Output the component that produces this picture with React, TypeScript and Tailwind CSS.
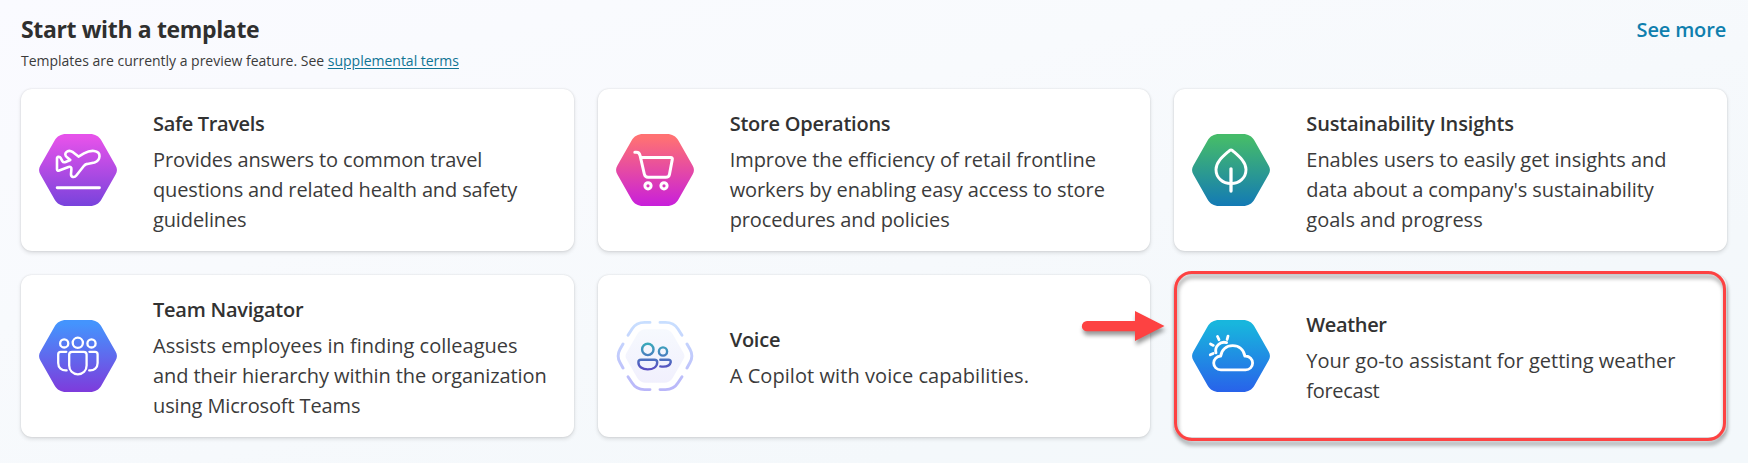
import React from "react";

type Line = { text: string; tracking: string };
type Template = {
  title: string;
  titleTracking: string;
  lines: Line[];
  icon: React.ReactNode;
  highlighted?: boolean;
};

const HEX =
  "M27 0H51C56 0 60 2.2 62.4 6.5L76.6 31.5C78.4 34.5 78.4 37.5 76.6 40.5L62.4 65.5C60 69.8 56 72 51 72H27C22 72 18 69.8 15.6 65.5L1.4 40.5C-.4 37.5-.4 34.5 1.4 31.5L15.6 6.5C18 2.2 22 0 27 0Z";

function HexIcon({ id, from, to, width, children }: { id: string; from: string; to: string; width: number; children: React.ReactNode }) {
  return (
    <svg width="78" height="72" viewBox="0 0 78 72" fill="none" className="shrink-0" aria-hidden="true">
      <defs>
        <linearGradient id={id} x1="0" y1="0" x2="0" y2="1">
          <stop offset="0.05" stopColor={from} />
          <stop offset="1" stopColor={to} />
        </linearGradient>
      </defs>
      <path d={HEX} fill={`url(#${id})`} />
      <g stroke="#fff" strokeWidth={width} strokeLinecap="round" strokeLinejoin="round">
        {children}
      </g>
    </svg>
  );
}

function PlaneIcon() {
  return (
    <HexIcon id="plane" from="#e552ea" to="#7843dc" width={2.6}>
      <path d="M18 24.5V35.2C18 36.6 19 37 20.2 36.5L29.5 33C31.6 32.4 32.6 33.4 32.4 35.2L32 40C31.8 43.4 35.4 44 37.3 41.5L45 31.8C46 30.6 46.8 30.2 48.4 29.9L55.5 28.4C61.5 26.5 63 17.8 55 17C51.5 16.6 48 17.8 45 19.4L39.5 22.6L34 18.2C28.6 14.6 23.6 19.8 28 23.3L31.3 26L26.6 28C25 28.6 24 28.2 23.3 27L21.6 23.9C20.7 22.3 18 22.5 18 24.5Z" />
      <path d="M18.2 53.7H60.4" strokeWidth="2.9" />
    </HexIcon>
  );
}

function CartIcon() {
  return (
    <HexIcon id="cart" from="#ff7173" to="#c81fdb" width={3}>
      <path d="M18.8 18.3H20.5C22.6 18.3 23.6 19.6 24.1 21.6L28.3 40C28.8 42.3 30 43.3 32 43.3H49.8C51.9 43.3 53.1 42.3 53.5 40.2L56.3 25.4C56.6 24 56 23.6 54.8 23.6H25" />
      <circle cx="32" cy="51.8" r="3.1" />
      <circle cx="48" cy="51.8" r="3.1" />
    </HexIcon>
  );
}

function LeafIcon() {
  return (
    <HexIcon id="leaf" from="#45bb6a" to="#137ab5" width={2.9}>
      <path d="M37.5 16.6C38.5 15.7 39.5 15.7 40.5 16.6C46 21.5 54 27.5 54 35.5C54 43.8 47.4 49.6 39 49.6S24 43.8 24 35.5C24 27.5 32 21.5 37.5 16.6Z" />
      <path d="M39 34.8V57" strokeWidth="3.3" />
    </HexIcon>
  );
}

function TeamIcon() {
  return (
    <HexIcon id="team" from="#4494fd" to="#7e3bdc" width={2.3}>
      <circle cx="25.2" cy="23.4" r="4.1" />
      <circle cx="38.8" cy="22.8" r="5.1" />
      <circle cx="52.5" cy="23.4" r="4.1" />
      <path d="M33 31.8H44.8C46.5 31.8 47.6 32.8 47.6 34.6V45.5C47.6 50.6 44 54.3 38.9 54.3S30.2 50.6 30.2 45.5V34.6C30.2 32.8 31.3 31.8 33 31.8Z" />
      <path d="M27.3 31.8H21.8C20.2 31.8 19.2 32.8 19.2 34.4V43C19.2 47.8 22.6 50.8 27.6 50.4" />
      <path d="M50.4 31.8H56C57.6 31.8 58.6 32.8 58.6 34.4V43C58.6 47.8 55.2 50.8 50.2 50.4" />
    </HexIcon>
  );
}

function VoiceIcon() {
  return (
    <svg width="78" height="72" viewBox="0 0 78 72" fill="none" className="shrink-0" aria-hidden="true">
      <defs>
        <linearGradient id="dash" x1="0" y1="0" x2="0" y2="72" gradientUnits="userSpaceOnUse">
          <stop stopColor="#c9e0ff" />
          <stop offset="1" stopColor="#b9b5f9" />
        </linearGradient>
        <linearGradient id="people" x1="0" y1="23" x2="0" y2="50" gradientUnits="userSpaceOnUse">
          <stop stopColor="#39acbb" />
          <stop offset="1" stopColor="#5a4bc2" />
        </linearGradient>
        <linearGradient id="core" x1="0" y1="0" x2="0" y2="1">
          <stop stopColor="#f6f9fe" />
          <stop offset="1" stopColor="#f1f0fd" />
        </linearGradient>
      </defs>
      <path d={HEX} fill="url(#core)" transform="translate(9.5 9.2) scale(.756 .744)" />
      <g stroke="url(#dash)" strokeWidth="2.9" strokeLinecap="round">
        <path d="M34 2.4H28.5C22 2.4 18.6 5 16 9L12 15.3" />
        <path d="M44 2.4H49.5C56 2.4 59.4 5 62 9L66 15.3" />
        <path d="M7 24L4 29.3C1.6 33.6 1.6 38.2 4 42.5L7 48" />
        <path d="M71 24L74 29.3C76.4 33.6 76.4 38.2 74 42.5L71 48" />
        <path d="M12 56.7L16 62.8C18.6 67 22 69.6 28.5 69.6H34" />
        <path d="M66 56.7L62 62.8C59.4 67 56 69.6 49.5 69.6H44" />
      </g>
      <g stroke="url(#people)" strokeWidth="2.4" strokeLinecap="round" strokeLinejoin="round">
        <circle cx="31.8" cy="29.4" r="5.7" />
        <circle cx="47" cy="31.5" r="4.1" />
        <path d="M25 39.8H38.4C40.2 39.8 41.2 40.8 41.2 42.2C41.2 46.8 37 49.4 31.7 49.4S22.4 46.8 22.4 42.2C22.4 40.8 23.3 39.8 25 39.8Z" />
        <path d="M44.3 39.8H52.4C54 39.8 55 40.7 54.7 42.2C54 45.8 49.5 47 44.3 46.4" />
      </g>
    </svg>
  );
}

function WeatherIcon() {
  return (
    <HexIcon id="weather" from="#18b6dd" to="#2862ea" width={2.8}>
      <path d="M28.7 36.2C29.4 29.7 34.3 25.7 40.7 25.7S52 29.7 52.8 36.2H53.6C57.7 36.2 60.6 39.2 60.6 43S57.7 49.9 53.6 49.9H28.8C24.7 49.9 21.7 46.8 21.7 43S24.7 36.2 28.7 36.2Z" />
      <path d="M24 32.8C22.4 26.5 28 20.8 34.6 22.6" />
      <path d="M36 16.2L35.1 19.5M25.5 16.5L27 19.7M18.5 23.9L21.3 25.4M18.3 34.8L21.2 33.4" />
    </HexIcon>
  );
}

const templates: Template[] = [
  {
    title: "Safe Travels",
    titleTracking: "tracking-[-0.35px]",
    icon: <PlaneIcon />,
    lines: [
      { text: "Provides answers to common travel", tracking: "tracking-[-0.12px]" },
      { text: "questions and related health and safety", tracking: "tracking-[-0.138px]" },
      { text: "guidelines", tracking: "tracking-[-0.13px]" },
    ],
  },
  {
    title: "Store Operations",
    titleTracking: "tracking-[-0.24px]",
    icon: <CartIcon />,
    lines: [
      { text: "Improve the efficiency of retail frontline", tracking: "tracking-[-0.05px]" },
      { text: "workers by enabling easy access to store", tracking: "tracking-[-0.08px]" },
      { text: "procedures and policies", tracking: "tracking-[-0.11px]" },
    ],
  },
  {
    title: "Sustainability Insights",
    titleTracking: "tracking-[-0.165px]",
    icon: <LeafIcon />,
    lines: [
      { text: "Enables users to easily get insights and", tracking: "tracking-[-0.05px]" },
      { text: "data about a company's sustainability", tracking: "tracking-[-0.083px]" },
      { text: "goals and progress", tracking: "tracking-[0px]" },
    ],
  },
  {
    title: "Team Navigator",
    titleTracking: "tracking-[-0.24px]",
    icon: <TeamIcon />,
    lines: [
      { text: "Assists employees in finding colleagues", tracking: "tracking-[0px]" },
      { text: "and their hierarchy within the organization", tracking: "tracking-[-0.095px]" },
      { text: "using Microsoft Teams", tracking: "tracking-[-0.13px]" },
    ],
  },
  {
    title: "Voice",
    titleTracking: "tracking-[-0.23px]",
    icon: <VoiceIcon />,
    lines: [{ text: "A Copilot with voice capabilities.", tracking: "tracking-[0.068px]" }],
  },
  {
    title: "Weather",
    titleTracking: "tracking-[-0.36px]",
    icon: <WeatherIcon />,
    highlighted: true,
    lines: [
      { text: "Your go-to assistant for getting weather", tracking: "tracking-[0.015px]" },
      { text: "forecast", tracking: "tracking-[-0.3px]" },
    ],
  },
];

function Callout() {
  return (
    <>
      <div className="pointer-events-none absolute -inset-y-1 right-px left-0 rounded-[18px] border-3 border-[#fd4242] drop-shadow-[1px_4px_2px_rgba(0,0,0,0.4)]" />
      <svg
        width="83"
        height="30"
        viewBox="0 0 83 30"
        className="absolute top-9 -left-23 overflow-visible drop-shadow-[1px_4px_2px_rgba(0,0,0,0.4)]"
        aria-hidden="true"
      >
        <path d="M5 10H53V0L82.5 15L53 30V20.3H5A5.1 5.1 0 0 1 5 10Z" fill="#fd4242" />
      </svg>
    </>
  );
}

function TemplateCard({ template }: { template: Template }) {
  return (
    <article className="relative flex h-[162px] items-center rounded-[11px] bg-white pl-[18px] shadow-[0_0_2px_rgba(0,0,0,0.12),0_2px_4px_rgba(0,0,0,0.12)]">
      {template.icon}
      <div className="pt-1 pl-9 text-xl leading-[30px] whitespace-nowrap text-[#3b3b3b]">
        <h3 className={`mb-1.5 font-semibold text-[#323232] ${template.titleTracking}`}>{template.title}</h3>
        <p>
          {template.lines.map((line) => (
            <span key={line.text} className={`block ${line.tracking}`}>
              {line.text}
            </span>
          ))}
        </p>
      </div>
      {template.highlighted && <Callout />}
    </article>
  );
}

export default function App() {
  return (
    <main className="h-[463px] w-full overflow-hidden bg-[linear-gradient(165deg,#fafaff_0%,#f8fafd_35%,#f4f8fb_75%,#f3f8fb_100%)] pt-[13px] pr-[21px] pl-[21px] font-['Open_Sans','Noto_Sans',sans-serif]">
      <header className="flex items-start justify-between">
        <div>
          <h2 className="text-[23px] leading-8 font-bold tracking-[-0.36px] text-[#2f2f2f]">Start with a template</h2>
          <p className="mt-1.5 text-sm leading-5 tracking-[-0.01px] text-[#3b3b3b]">
            Templates are currently a preview feature. See{" "}
            <a href="#terms" className="text-[#0f7494] underline underline-offset-2">
              supplemental terms
            </a>
          </p>
        </div>
        <a href="#templates" className="mt-0.5 mr-px text-xl leading-[30px] font-semibold tracking-[-0.16px] text-[#0f7fae]">
          See more
        </a>
      </header>
      <section className="mt-[18px] grid grid-cols-3 gap-6">
        {templates.map((template) => (
          <TemplateCard key={template.title} template={template} />
        ))}
      </section>
    </main>
  );
}
